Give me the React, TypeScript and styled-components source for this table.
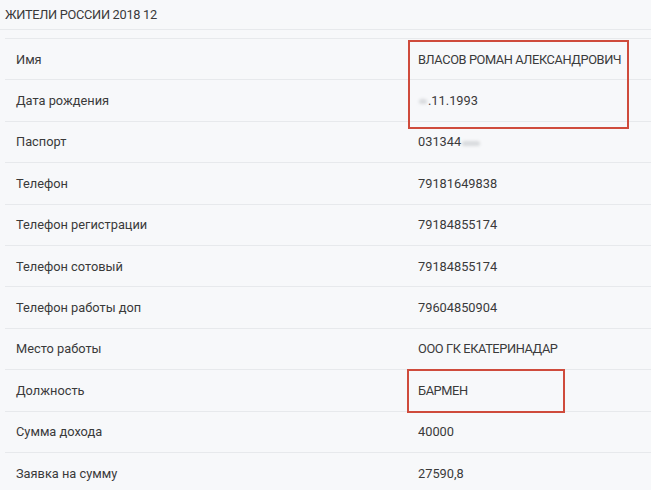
import React from "react";
import styled, { createGlobalStyle } from "styled-components";

const Global = createGlobalStyle`
  html, body { margin: 0; padding: 0; }
  body {
    background: #f7f8fa;
    font-family: Roboto, "Noto Sans", sans-serif;
    color: #333;
    width: 651px;
    height: 490px;
    overflow: hidden;
  }
`;

const Page = styled.div`
  display: flex;
  flex-direction: column;
`;

const Header = styled.div`
  height: 29px;
  display: flex;
  align-items: center;
  padding-left: 5px;
  font-size: 12.8px;
  letter-spacing: -0.3px;
  color: #3a3a3a;
  border-bottom: 1px solid #e7e9ec;
`;

const TableWrap = styled.div`
  position: relative;
  margin: 8px 0 0 5px;
  border-top: 1px solid #e7e9ec;
`;

const Row = styled.div`
  display: grid;
  grid-template-columns: 402px 1fr;
  height: 41.4px;
  box-sizing: border-box;
  border-bottom: 1px solid #e7e9ec;
  align-items: center;
  font-size: 12.8px;
`;

const Cell = styled.div<{ $caps?: boolean }>`
  padding-left: 11px;
  color: #3a3a3a;
  white-space: nowrap;
  letter-spacing: ${(p) => (p.$caps ? "-0.4px" : "0")};
`;

const Blur = styled.span<{ $w: number }>`
  display: inline-block;
  width: ${(p) => p.$w}px;
  height: 5px;
  margin: 0 1px;
  vertical-align: middle;
  background: #d8dadd;
  border-radius: 3px;
  filter: blur(1.5px);
`;

const Highlight = styled.div<{ $top: number; $left: number; $w: number; $h: number }>`
  position: absolute;
  top: ${(p) => p.$top}px;
  left: ${(p) => p.$left}px;
  width: ${(p) => p.$w}px;
  height: ${(p) => p.$h}px;
  box-sizing: border-box;
  border: 2px solid #cf4b3c;
  pointer-events: none;
`;

const rows: { label: string; value: React.ReactNode; caps?: boolean }[] = [
  { label: "Имя", value: "ВЛАСОВ РОМАН АЛЕКСАНДРОВИЧ", caps: true },
  { label: "Дата рождения", value: <><Blur $w={8} />.11.1993</> },
  { label: "Паспорт", value: <>031344<Blur $w={18} /></> },
  { label: "Телефон", value: "79181649838" },
  { label: "Телефон регистрации", value: "79184855174" },
  { label: "Телефон сотовый", value: "79184855174" },
  { label: "Телефон работы доп", value: "79604850904" },
  { label: "Место работы", value: "ООО ГК ЕКАТЕРИНАДАР", caps: true },
  { label: "Должность", value: "БАРМЕН", caps: true },
  { label: "Сумма дохода", value: "40000" },
  { label: "Заявка на сумму", value: "27590,8" },
];

export default function App() {
  return (
    <>
      <Global />
      <Page>
        <Header>ЖИТЕЛИ РОССИИ 2018 12</Header>
        <TableWrap>
          {rows.map((r) => (
            <Row key={r.label}>
              <Cell>{r.label}</Cell>
              <Cell $caps={r.caps}>{r.value}</Cell>
            </Row>
          ))}
          <Highlight $top={1} $left={403} $w={221} $h={89} />
          <Highlight $top={330} $left={402} $w={158} $h={44} />
        </TableWrap>
      </Page>
    </>
  );
}
